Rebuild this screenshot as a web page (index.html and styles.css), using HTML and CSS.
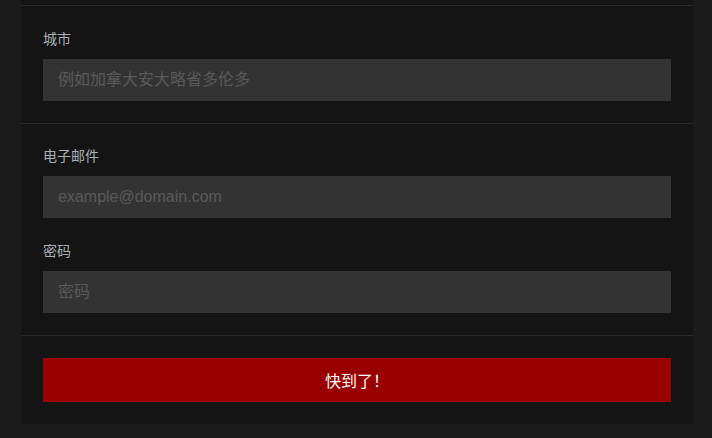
FILE: index.html
```html
<!DOCTYPE html>
<html lang="zh">
<head>
<meta charset="utf-8">
<link rel="stylesheet" href="styles.css">
</head>
<body>
<div class="panel">
  <div class="prev"></div>
  <div class="section first">
    <div class="field">
      <label class="label">城市</label>
      <input class="input" type="text" placeholder="例如加拿大安大略省多伦多">
    </div>
  </div>
  <div class="section">
    <div class="field">
      <label class="label">电子邮件</label>
      <input class="input" type="email" placeholder="example@domain.com">
    </div>
    <div class="field">
      <label class="label">密码</label>
      <input class="input" type="password" placeholder="密码">
    </div>
  </div>
  <div class="section last">
    <button class="btn" type="button">快到了！</button>
  </div>
</div>
</body>
</html>
```
FILE: styles.css
```css
html, body {
  margin: 0;
  padding: 0;
  background: #1b1b1b;
  font-family: "Liberation Sans", "Noto Sans CJK SC", sans-serif;
}
.panel {
  margin: 0 19px 0 21px;
  background: #141414;
  display: flex;
  flex-direction: column;
}
.prev {
  height: 5px;
  border-bottom: 1px solid #2a2a2a;
}
.section {
  padding: 22px;
  border-bottom: 1px solid #2a2a2a;
  display: flex;
  flex-direction: column;
  gap: 23px;
}
.section.first {
  padding-top: 23px;
}
.section.last {
  border-bottom: none;
}
.field {
  display: flex;
  flex-direction: column;
}
.label {
  font-size: 14px;
  line-height: 20px;
  color: #aab0b4;
  margin-bottom: 10px;
}
.input {
  box-sizing: border-box;
  height: 42px;
  width: 100%;
  border: none;
  outline: none;
  background: #333;
  color: #ddd;
  padding: 0 15px;
  font-family: "Liberation Sans", "Noto Sans CJK SC", sans-serif;
  font-size: 16px;
}
.input::placeholder {
  color: #5a5a5a;
}
.btn {
  height: 44px;
  width: 100%;
  border: none;
  background: #990000;
  color: #fff;
  font-family: "Liberation Sans", "Noto Sans CJK SC", sans-serif;
  font-size: 16px;
  cursor: pointer;
}
```
